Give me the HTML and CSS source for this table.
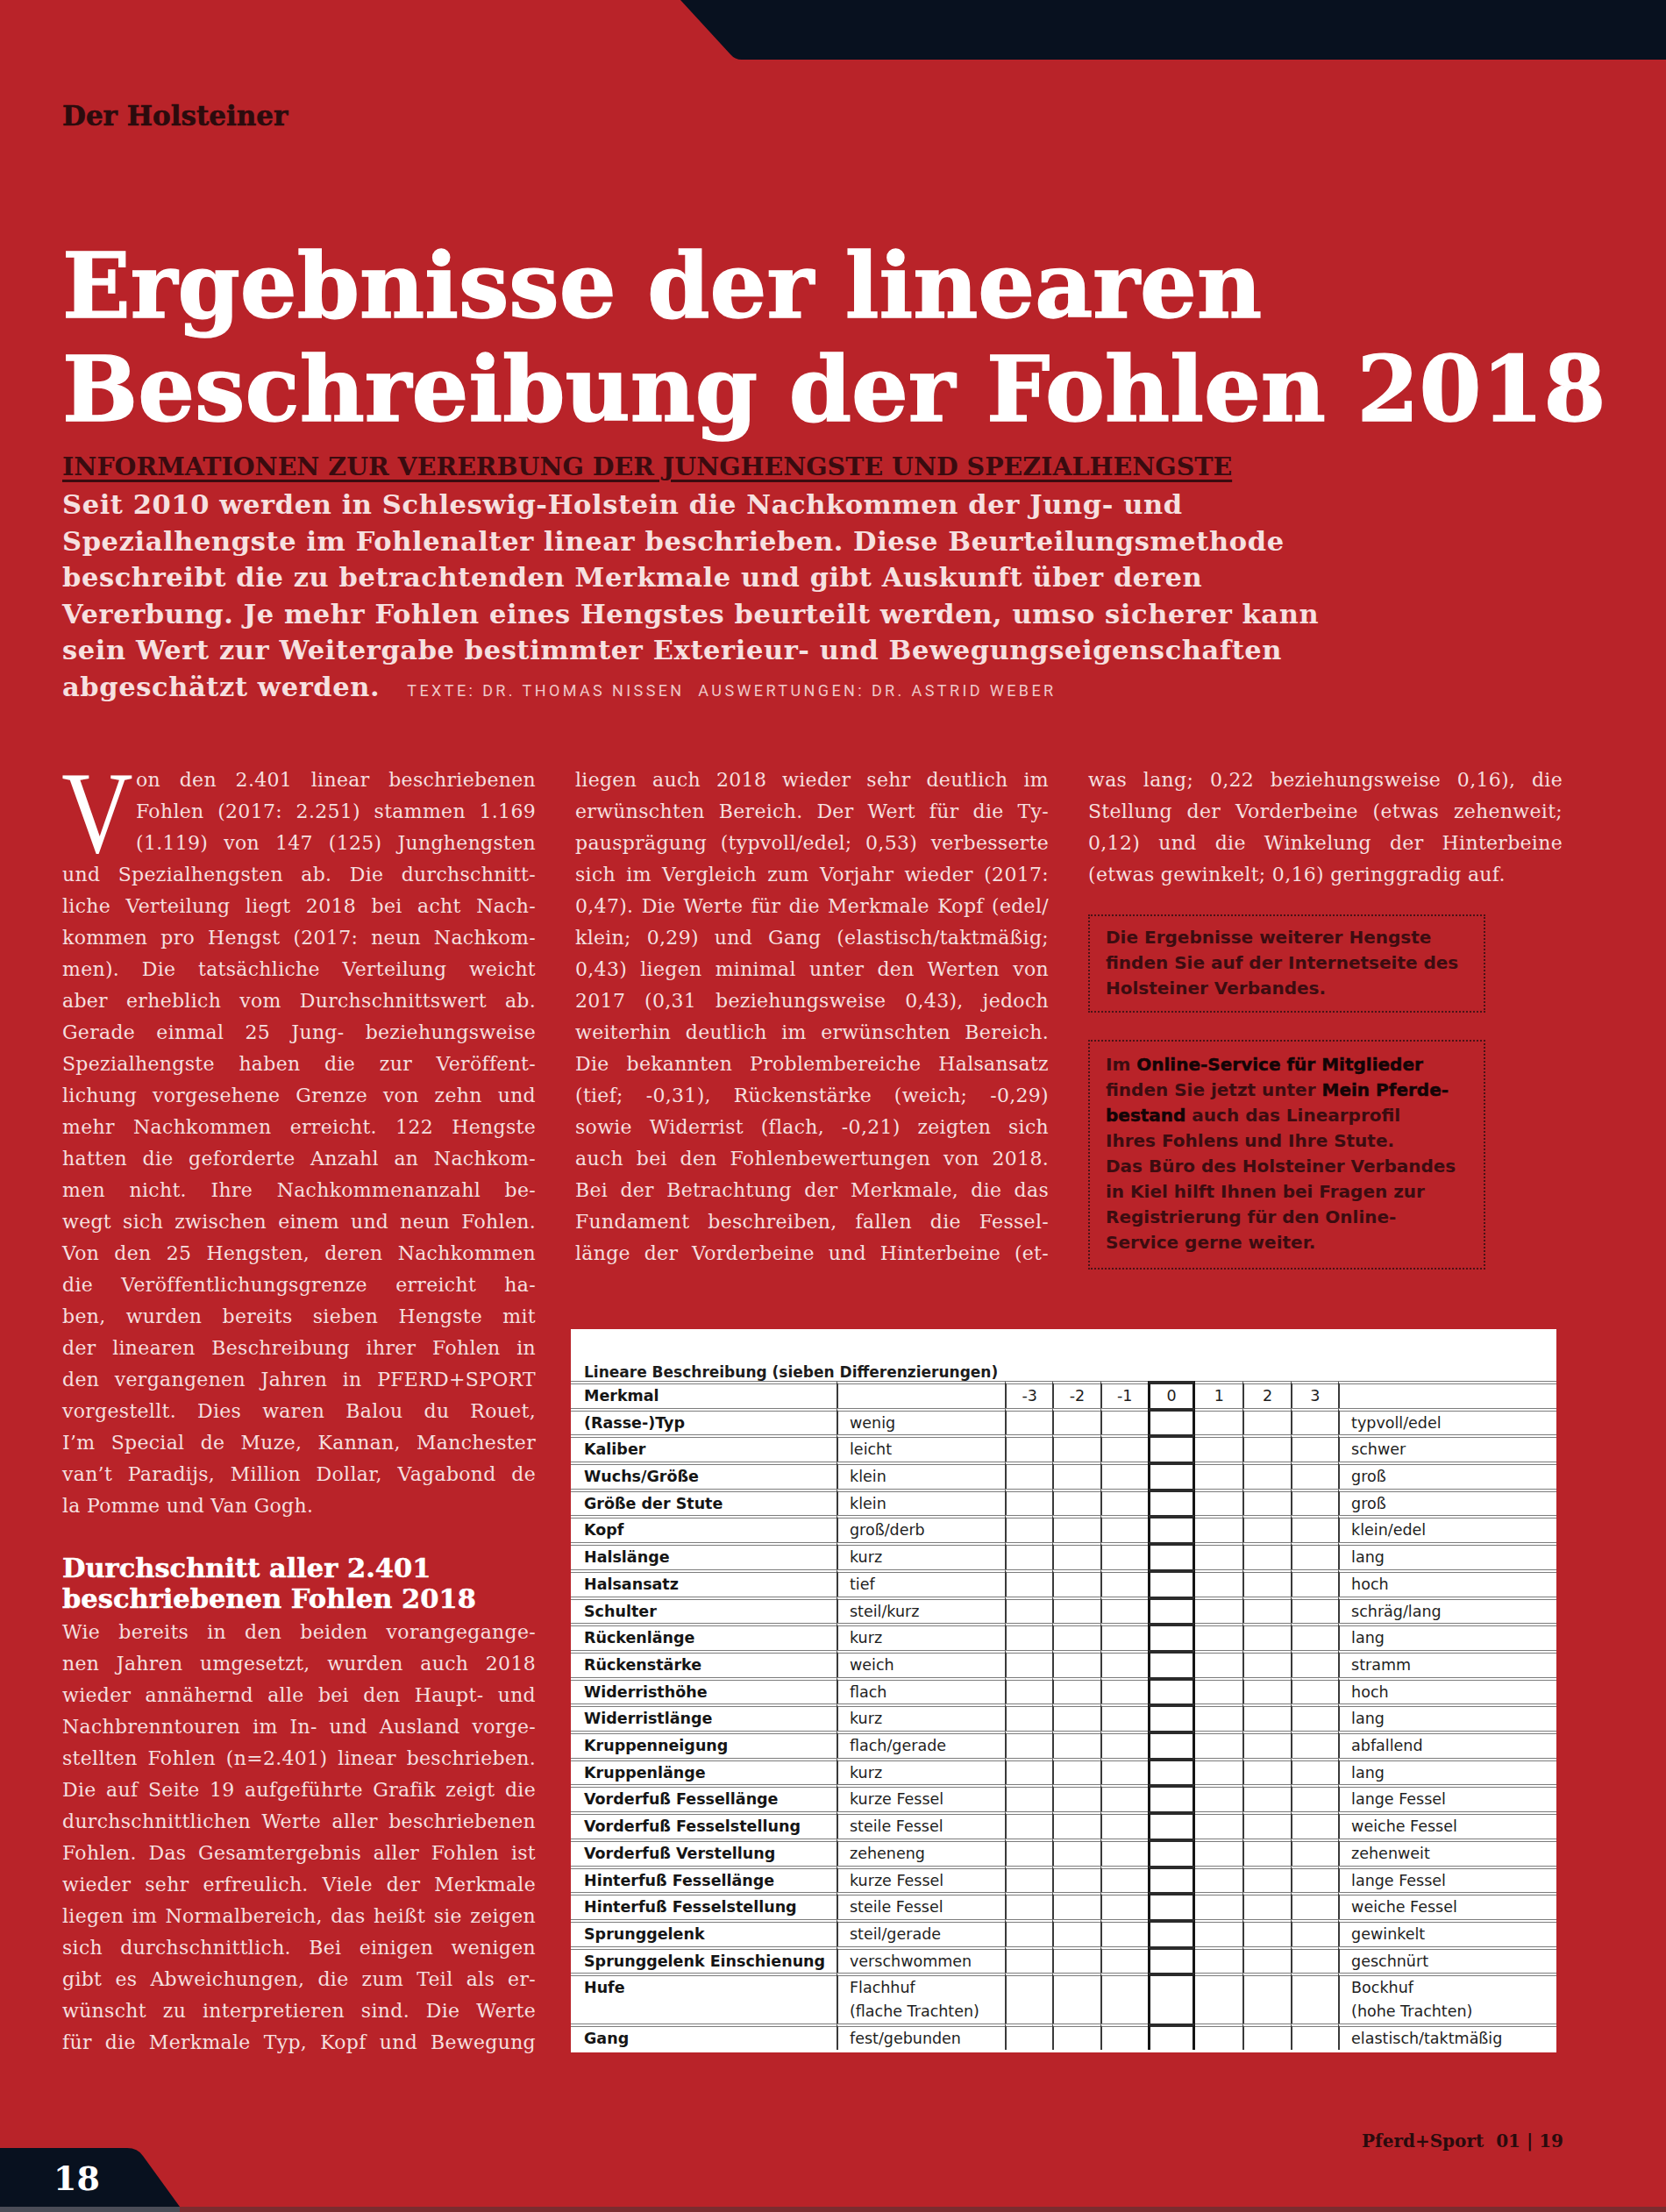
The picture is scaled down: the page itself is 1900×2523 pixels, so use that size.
FILE: index.html
```html
<!DOCTYPE html>
<html lang="de">
<head>
<meta charset="utf-8">
<title>Ergebnisse der linearen Beschreibung der Fohlen 2018</title>
<link rel="stylesheet" href="styles.css">
</head>
<body>
<div class="page">
  <div class="topbar"></div>
  <header class="head">
    <div class="kicker">Der Holsteiner</div>
    <h1 class="title">Ergebnisse der linearen<br>Beschreibung der Fohlen 2018</h1>
    <h2 class="sub">INFORMATIONEN ZUR VERERBUNG DER JUNGHENGSTE UND SPEZIALHENGSTE</h2>
    <p class="intro">Seit 2010 werden in Schleswig-Holstein die Nachkommen der Jung- und<br>Spezialhengste im Fohlenalter linear beschrieben. Diese Beurteilungsmethode<br>beschreibt die zu betrachtenden Merkmale und gibt Auskunft über deren<br>Vererbung. Je mehr Fohlen eines Hengstes beurteilt werden, umso sicherer kann<br>sein Wert zur Weitergabe bestimmter Exterieur- und Bewegungseigenschaften<br>abgeschätzt werden.<span class="credit">TEXTE: DR. THOMAS NISSEN&nbsp; AUSWERTUNGEN: DR. ASTRID WEBER</span></p>
  </header>

  <main class="cols">
    <div class="col col1">
      <p class="body"><span class="drop">V</span><span class="l">on den 2.401 linear beschriebenen</span><span class="l ind">Fohlen (2017: 2.251) stammen 1.169</span><span class="l ind">(1.119) von 147 (125) Junghengsten</span><span class="l">und Spezialhengsten ab. Die durchschnitt-</span><span class="l">liche Verteilung liegt 2018 bei acht Nach-</span><span class="l">kommen pro Hengst (2017: neun Nachkom-</span><span class="l">men). Die tatsächliche Verteilung weicht</span><span class="l">aber erheblich vom Durchschnittswert ab.</span><span class="l">Gerade einmal 25 Jung- beziehungsweise</span><span class="l">Spezialhengste haben die zur Veröffent-</span><span class="l">lichung vorgesehene Grenze von zehn und</span><span class="l">mehr Nachkommen erreicht. 122 Hengste</span><span class="l">hatten die geforderte Anzahl an Nachkom-</span><span class="l">men nicht. Ihre Nachkommenanzahl be-</span><span class="l">wegt sich zwischen einem und neun Fohlen.</span><span class="l">Von den 25 Hengsten, deren Nachkommen</span><span class="l">die Veröffentlichungsgrenze erreicht ha-</span><span class="l">ben, wurden bereits sieben Hengste mit</span><span class="l">der linearen Beschreibung ihrer Fohlen in</span><span class="l">den vergangenen Jahren in PFERD+SPORT</span><span class="l">vorgestellt. Dies waren Balou du Rouet,</span><span class="l">I’m Special de Muze, Kannan, Manchester</span><span class="l">van’t Paradijs, Million Dollar, Vagabond de</span><span class="l end">la Pomme und Van Gogh.</span></p>
      <h3 class="subhead">Durchschnitt aller 2.401<br>beschriebenen Fohlen 2018</h3>
      <p class="body"><span class="l">Wie bereits in den beiden vorangegange-</span><span class="l">nen Jahren umgesetzt, wurden auch 2018</span><span class="l">wieder annähernd alle bei den Haupt- und</span><span class="l">Nachbrenntouren im In- und Ausland vorge-</span><span class="l">stellten Fohlen (n=2.401) linear beschrieben.</span><span class="l">Die auf Seite 19 aufgeführte Grafik zeigt die</span><span class="l">durchschnittlichen Werte aller beschriebenen</span><span class="l">Fohlen. Das Gesamtergebnis aller Fohlen ist</span><span class="l">wieder sehr erfreulich. Viele der Merkmale</span><span class="l">liegen im Normalbereich, das heißt sie zeigen</span><span class="l">sich durchschnittlich. Bei einigen wenigen</span><span class="l">gibt es Abweichungen, die zum Teil als er-</span><span class="l">wünscht zu interpretieren sind. Die Werte</span><span class="l">für die Merkmale Typ, Kopf und Bewegung</span></p>
    </div>

    <div class="col col2">
      <p class="body"><span class="l">liegen auch 2018 wieder sehr deutlich im</span><span class="l">erwünschten Bereich. Der Wert für die Ty-</span><span class="l">pausprägung (typvoll/edel; 0,53) verbesserte</span><span class="l">sich im Vergleich zum Vorjahr wieder (2017:</span><span class="l">0,47). Die Werte für die Merkmale Kopf (edel/</span><span class="l">klein; 0,29) und Gang (elastisch/taktmäßig;</span><span class="l">0,43) liegen minimal unter den Werten von</span><span class="l">2017 (0,31 beziehungsweise 0,43), jedoch</span><span class="l">weiterhin deutlich im erwünschten Bereich.</span><span class="l">Die bekannten Problembereiche Halsansatz</span><span class="l">(tief; -0,31), Rückenstärke (weich; -0,29)</span><span class="l">sowie Widerrist (flach, -0,21) zeigten sich</span><span class="l">auch bei den Fohlenbewertungen von 2018.</span><span class="l">Bei der Betrachtung der Merkmale, die das</span><span class="l">Fundament beschreiben, fallen die Fessel-</span><span class="l">länge der Vorderbeine und Hinterbeine (et-</span></p>
    </div>

    <div class="col col3">
      <p class="body"><span class="l">was lang; 0,22 beziehungsweise 0,16), die</span><span class="l">Stellung der Vorderbeine (etwas zehenweit;</span><span class="l">0,12) und die Winkelung der Hinterbeine</span><span class="l end">(etwas gewinkelt; 0,16) geringgradig auf.</span></p>
      <div class="note">Die Ergebnisse weiterer Hengste<br>finden Sie auf der Internetseite des<br>Holsteiner Verbandes.</div>
      <div class="note note2">Im <b>Online-Service für Mitglieder</b><br>finden Sie jetzt unter <b>Mein Pferde-</b><br><b>bestand</b> auch das Linearprofil<br>Ihres Fohlens und Ihre Stute.<br>Das Büro des Holsteiner Verbandes<br>in Kiel hilft Ihnen bei Fragen zur<br>Registrierung für den Online-<br>Service gerne weiter.</div>
    </div>

    <section class="tablebox">
      <div class="tcap">Lineare Beschreibung (sieben Differenzierungen)</div>
      <div class="lt">
        <div class="tr"><div>Merkmal</div><div></div><div class="n">-3</div><div class="n">-2</div><div class="n">-1</div><div class="n z">0</div><div class="n">1</div><div class="n">2</div><div class="n">3</div><div></div></div>
        <div class="tr"><div>(Rasse-)Typ</div><div>wenig</div><div class="n"></div><div class="n"></div><div class="n"></div><div class="n z"></div><div class="n"></div><div class="n"></div><div class="n"></div><div>typvoll/edel</div></div>
        <div class="tr"><div>Kaliber</div><div>leicht</div><div class="n"></div><div class="n"></div><div class="n"></div><div class="n z"></div><div class="n"></div><div class="n"></div><div class="n"></div><div>schwer</div></div>
        <div class="tr"><div>Wuchs/Größe</div><div>klein</div><div class="n"></div><div class="n"></div><div class="n"></div><div class="n z"></div><div class="n"></div><div class="n"></div><div class="n"></div><div>groß</div></div>
        <div class="tr"><div>Größe der Stute</div><div>klein</div><div class="n"></div><div class="n"></div><div class="n"></div><div class="n z"></div><div class="n"></div><div class="n"></div><div class="n"></div><div>groß</div></div>
        <div class="tr"><div>Kopf</div><div>groß/derb</div><div class="n"></div><div class="n"></div><div class="n"></div><div class="n z"></div><div class="n"></div><div class="n"></div><div class="n"></div><div>klein/edel</div></div>
        <div class="tr"><div>Halslänge</div><div>kurz</div><div class="n"></div><div class="n"></div><div class="n"></div><div class="n z"></div><div class="n"></div><div class="n"></div><div class="n"></div><div>lang</div></div>
        <div class="tr"><div>Halsansatz</div><div>tief</div><div class="n"></div><div class="n"></div><div class="n"></div><div class="n z"></div><div class="n"></div><div class="n"></div><div class="n"></div><div>hoch</div></div>
        <div class="tr"><div>Schulter</div><div>steil/kurz</div><div class="n"></div><div class="n"></div><div class="n"></div><div class="n z"></div><div class="n"></div><div class="n"></div><div class="n"></div><div>schräg/lang</div></div>
        <div class="tr"><div>Rückenlänge</div><div>kurz</div><div class="n"></div><div class="n"></div><div class="n"></div><div class="n z"></div><div class="n"></div><div class="n"></div><div class="n"></div><div>lang</div></div>
        <div class="tr"><div>Rückenstärke</div><div>weich</div><div class="n"></div><div class="n"></div><div class="n"></div><div class="n z"></div><div class="n"></div><div class="n"></div><div class="n"></div><div>stramm</div></div>
        <div class="tr"><div>Widerristhöhe</div><div>flach</div><div class="n"></div><div class="n"></div><div class="n"></div><div class="n z"></div><div class="n"></div><div class="n"></div><div class="n"></div><div>hoch</div></div>
        <div class="tr"><div>Widerristlänge</div><div>kurz</div><div class="n"></div><div class="n"></div><div class="n"></div><div class="n z"></div><div class="n"></div><div class="n"></div><div class="n"></div><div>lang</div></div>
        <div class="tr"><div>Kruppenneigung</div><div>flach/gerade</div><div class="n"></div><div class="n"></div><div class="n"></div><div class="n z"></div><div class="n"></div><div class="n"></div><div class="n"></div><div>abfallend</div></div>
        <div class="tr"><div>Kruppenlänge</div><div>kurz</div><div class="n"></div><div class="n"></div><div class="n"></div><div class="n z"></div><div class="n"></div><div class="n"></div><div class="n"></div><div>lang</div></div>
        <div class="tr"><div>Vorderfuß Fessellänge</div><div>kurze Fessel</div><div class="n"></div><div class="n"></div><div class="n"></div><div class="n z"></div><div class="n"></div><div class="n"></div><div class="n"></div><div>lange Fessel</div></div>
        <div class="tr"><div>Vorderfuß Fesselstellung</div><div>steile Fessel</div><div class="n"></div><div class="n"></div><div class="n"></div><div class="n z"></div><div class="n"></div><div class="n"></div><div class="n"></div><div>weiche Fessel</div></div>
        <div class="tr"><div>Vorderfuß Verstellung</div><div>zeheneng</div><div class="n"></div><div class="n"></div><div class="n"></div><div class="n z"></div><div class="n"></div><div class="n"></div><div class="n"></div><div>zehenweit</div></div>
        <div class="tr"><div>Hinterfuß Fessellänge</div><div>kurze Fessel</div><div class="n"></div><div class="n"></div><div class="n"></div><div class="n z"></div><div class="n"></div><div class="n"></div><div class="n"></div><div>lange Fessel</div></div>
        <div class="tr"><div>Hinterfuß Fesselstellung</div><div>steile Fessel</div><div class="n"></div><div class="n"></div><div class="n"></div><div class="n z"></div><div class="n"></div><div class="n"></div><div class="n"></div><div>weiche Fessel</div></div>
        <div class="tr"><div>Sprunggelenk</div><div>steil/gerade</div><div class="n"></div><div class="n"></div><div class="n"></div><div class="n z"></div><div class="n"></div><div class="n"></div><div class="n"></div><div>gewinkelt</div></div>
        <div class="tr"><div>Sprunggelenk Einschienung</div><div>verschwommen</div><div class="n"></div><div class="n"></div><div class="n"></div><div class="n z"></div><div class="n"></div><div class="n"></div><div class="n"></div><div>geschnürt</div></div>
        <div class="tr"><div>Hufe</div><div>Flachhuf<br>(flache Trachten)</div><div class="n"></div><div class="n"></div><div class="n"></div><div class="n z"></div><div class="n"></div><div class="n"></div><div class="n"></div><div>Bockhuf<br>(hohe Trachten)</div></div>
        <div class="tr"><div>Gang</div><div>fest/gebunden</div><div class="n"></div><div class="n"></div><div class="n"></div><div class="n z"></div><div class="n"></div><div class="n"></div><div class="n"></div><div>elastisch/taktmäßig</div></div>
      </div>
    </section>
  </main>

  <footer class="foot">
    <div class="pagetab">18</div>
    <div class="mag">Pferd+Sport&nbsp; 01 | 19</div>
  </footer>
  <div class="strip"></div>
</div>
</body>
</html>
```

FILE: styles.css
```css
html, body {
  margin: 0;
  padding: 0;
  background: #b92329;
}

.page {
  width: 1900px;
  height: 2523px;
  display: flex;
  flex-direction: column;
  background: #b92329;
  overflow: hidden;
}

.topbar {
  flex: none;
  height: 68px;
  margin-left: 776px;
  background: #08111f;
  clip-path: path('M0 0 H1124 V68 H70 Q62 68 57 62 Z');
}

.head {
  padding-left: 71px;
}

.kicker {
  margin-top: 48px;
  font: 700 31px/32px "DejaVu Serif", serif;
  color: #2b0b0d;
  -webkit-text-stroke: 0.6px #2b0b0d;
}

.title {
  margin: 119px 0 0;
  font: 700 102px/118px "DejaVu Serif", serif;
  letter-spacing: 0;
  color: #ffffff;
  -webkit-text-stroke: 1.4px #ffffff;
}

.sub {
  margin: 14px 0 0;
  font: 700 28.5px/30px "DejaVu Serif", serif;
  color: #3a0b0f;
  text-decoration: underline;
  text-decoration-thickness: 3px;
  text-underline-offset: 5px;
}

.intro {
  margin: 8px 0 0;
  font: 700 30.5px/41.6px "DejaVu Serif", serif;
  letter-spacing: 0.6px;
  color: #f6e0e0;
  white-space: nowrap;
}

.credit {
  margin-left: 31px;
  font: 400 18px "Roboto", sans-serif;
  letter-spacing: 3.4px;
  color: #efc8c8;
}

.cols {
  margin-top: 67.4px;
  padding-left: 71px;
  display: grid;
  grid-template-columns: 540px 540px 541px;
  column-gap: 45px;
  align-items: start;
}

.col1 {
  grid-row: 1 / span 2;
}

.body {
  margin: 0;
  font: 400 22px/36px "DejaVu Serif", serif;
  letter-spacing: 0.3px;
  color: #f5dfdf;
}

.l {
  display: block;
  text-align: justify;
  text-align-last: justify;
  white-space: nowrap;
}

.l.end {
  text-align-last: left;
}

.l.ind {
  padding-left: 9px;
}

.drop {
  float: left;
  width: 84px;
  height: 106px;
  padding: 2px 0 0 5px;
  box-sizing: content-box;
  margin-left: -5px;
  font: 400 134px/106px "Liberation Serif", serif;
  color: #ffffff;
  transform: scaleX(0.84);
  transform-origin: 0 0;
}

.subhead {
  margin: 35.5px 0 2.5px;
  font: 700 30.5px/35px "DejaVu Serif", serif;
  color: #ffffff;
  -webkit-text-stroke: 0.5px #ffffff;
}

.note {
  margin-top: 27px;
  width: 453px;
  box-sizing: border-box;
  border: 2px dotted #4a1216;
  padding: 10.5px 10px 10.5px 18px;
  font: 700 20px/29px "DejaVu Sans", sans-serif;
  color: #3c0c10;
  white-space: nowrap;
}

.note2 {
  margin-top: 31px;
  padding: 12.5px 10px 13.5px 18px;
}

.note b {
  color: #140406;
  -webkit-text-stroke: 0.5px #140406;
}

.tablebox {
  grid-column: 2 / span 2;
  margin: 61px 7px 0 -5px;
  padding: 39px 0 2.5px;
  background: #ffffff;
}

.tcap {
  padding-left: 15px;
  font: 700 17px/20px "DejaVu Sans", sans-serif;
  color: #1c1c1c;
  white-space: nowrap;
}

.tr {
  display: grid;
  grid-template-columns: 303px 192px repeat(7, 54.3px) 249px;
}

.tr > div {
  box-sizing: border-box;
  border-top: 4px double #7c7c7c;
  border-left: 2px solid #3a3a3a;
  padding-left: 13px;
  font: 400 17.5px/26.7px "DejaVu Sans", sans-serif;
  color: #1e1e1e;
  white-space: nowrap;
}

.tr > div:first-child {
  border-left: 0;
  padding-left: 15px;
  font-weight: 700;
  color: #151515;
}

.tr > .n {
  padding-left: 0;
  text-align: center;
}

.tr > .z {
  border-left: 3px solid #151515;
  border-right: 3px solid #151515;
  border-top: 4px solid #2b2b2b;
}

.tr > .z + div {
  border-left: 0;
}

.foot {
  margin-top: auto;
  display: flex;
  justify-content: space-between;
  align-items: flex-end;
}

.pagetab {
  width: 205px;
  height: 67px;
  box-sizing: border-box;
  padding: 3px 0 0 61px;
  background: #08111f;
  clip-path: path('M0 0 H145 Q157 0 163 9 L205 67 H0 Z');
  font: 700 38px/64px "DejaVu Serif", serif;
  color: #ffffff;
}

.mag {
  margin: 0 117px 63px 0;
  font: 700 20px/24px "DejaVu Serif", serif;
  color: #2a0b0d;
}

.strip {
  flex: none;
  height: 6px;
  background: linear-gradient(90deg, #4a4c57 0 205px, #7b2c30 205px);
}
```
